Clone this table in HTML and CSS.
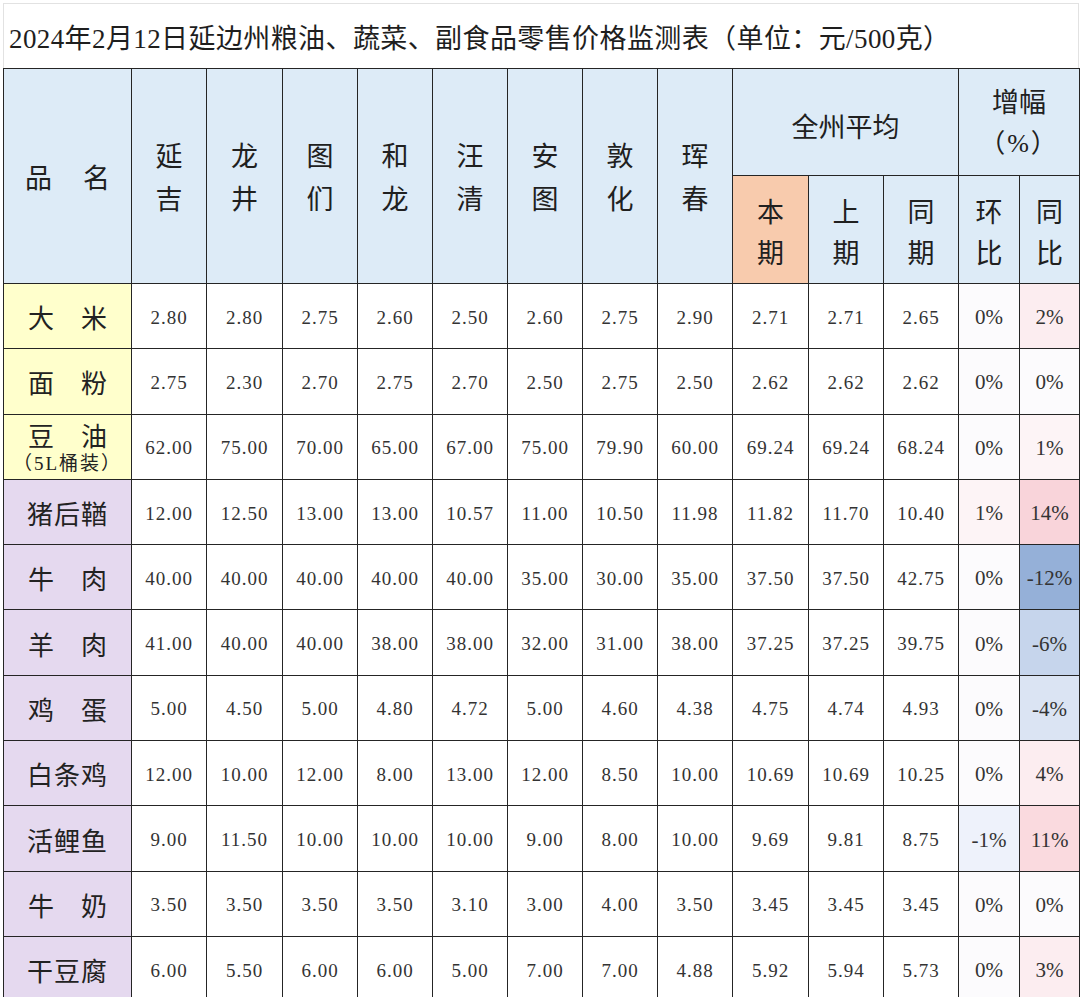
FILE: index.html
```html
<!DOCTYPE html>
<html lang="zh-CN">
<head>
<meta charset="utf-8">
<title>延边州粮油、蔬菜、副食品零售价格监测表</title>
<link rel="stylesheet" href="styles.css">
</head>
<body>
<div class="sheet">
  <div class="title">2024年2月12日延边州粮油、蔬菜、副食品零售价格监测表（单位：元/500克）</div>
  <table class="grid">
    <colgroup>
      <col class="c-name"><col class="c-city"><col class="c-city w76"><col class="c-city"><col class="c-city"><col class="c-city"><col class="c-city"><col class="c-city"><col class="c-city"><col class="c-city w76"><col class="c-city"><col class="c-city"><col class="c-pct w61"><col class="c-pct">
    </colgroup>
    <thead>
      <tr class="hr1">
        <th rowspan="2" class="hname"><div class="spread"><span>品</span><span>名</span></div></th>
        <th rowspan="2">延<br>吉</th>
        <th rowspan="2">龙<br>井</th>
        <th rowspan="2">图<br>们</th>
        <th rowspan="2">和<br>龙</th>
        <th rowspan="2">汪<br>清</th>
        <th rowspan="2">安<br>图</th>
        <th rowspan="2">敦<br>化</th>
        <th rowspan="2">珲<br>春</th>
        <th colspan="3" class="group">全州平均</th>
        <th colspan="2" class="rise">增幅<br><span class="pct">（%）</span></th>
      </tr>
      <tr class="hr2">
        <th class="cur">本<br>期</th>
        <th>上<br>期</th>
        <th>同<br>期</th>
        <th>环<br>比</th>
        <th>同<br>比</th>
      </tr>
    </thead>
    <tbody>
      <tr>
        <td class="name grain"><div class="spread"><span>大</span><span>米</span></div></td>
        <td>2.80</td><td>2.80</td><td>2.75</td><td>2.60</td><td>2.50</td><td>2.60</td><td>2.75</td><td>2.90</td>
        <td>2.71</td><td>2.71</td><td>2.65</td>
        <td class="pc p0">0%</td><td class="pc up1">2%</td>
      </tr>
      <tr>
        <td class="name grain"><div class="spread"><span>面</span><span>粉</span></div></td>
        <td>2.75</td><td>2.30</td><td>2.70</td><td>2.75</td><td>2.70</td><td>2.50</td><td>2.75</td><td>2.50</td>
        <td>2.62</td><td>2.62</td><td>2.62</td>
        <td class="pc p0">0%</td><td class="pc p0">0%</td>
      </tr>
      <tr>
        <td class="name grain"><div class="spread"><span>豆</span><span>油</span></div><div class="note">（5L桶装）</div></td>
        <td>62.00</td><td>75.00</td><td>70.00</td><td>65.00</td><td>67.00</td><td>75.00</td><td>79.90</td><td>60.00</td>
        <td>69.24</td><td>69.24</td><td>68.24</td>
        <td class="pc p0">0%</td><td class="pc up0">1%</td>
      </tr>
      <tr>
        <td class="name side"><div class="three">猪后鞧</div></td>
        <td>12.00</td><td>12.50</td><td>13.00</td><td>13.00</td><td>10.57</td><td>11.00</td><td>10.50</td><td>11.98</td>
        <td>11.82</td><td>11.70</td><td>10.40</td>
        <td class="pc up0">1%</td><td class="pc up3">14%</td>
      </tr>
      <tr>
        <td class="name side"><div class="spread"><span>牛</span><span>肉</span></div></td>
        <td>40.00</td><td>40.00</td><td>40.00</td><td>40.00</td><td>40.00</td><td>35.00</td><td>30.00</td><td>35.00</td>
        <td>37.50</td><td>37.50</td><td>42.75</td>
        <td class="pc p0">0%</td><td class="pc dn3">-12%</td>
      </tr>
      <tr>
        <td class="name side"><div class="spread"><span>羊</span><span>肉</span></div></td>
        <td>41.00</td><td>40.00</td><td>40.00</td><td>38.00</td><td>38.00</td><td>32.00</td><td>31.00</td><td>38.00</td>
        <td>37.25</td><td>37.25</td><td>39.75</td>
        <td class="pc p0">0%</td><td class="pc dn2">-6%</td>
      </tr>
      <tr>
        <td class="name side"><div class="spread"><span>鸡</span><span>蛋</span></div></td>
        <td>5.00</td><td>4.50</td><td>5.00</td><td>4.80</td><td>4.72</td><td>5.00</td><td>4.60</td><td>4.38</td>
        <td>4.75</td><td>4.74</td><td>4.93</td>
        <td class="pc p0">0%</td><td class="pc dn1">-4%</td>
      </tr>
      <tr>
        <td class="name side"><div class="three">白条鸡</div></td>
        <td>12.00</td><td>10.00</td><td>12.00</td><td>8.00</td><td>13.00</td><td>12.00</td><td>8.50</td><td>10.00</td>
        <td>10.69</td><td>10.69</td><td>10.25</td>
        <td class="pc p0">0%</td><td class="pc up1">4%</td>
      </tr>
      <tr>
        <td class="name side"><div class="three">活鲤鱼</div></td>
        <td>9.00</td><td>11.50</td><td>10.00</td><td>10.00</td><td>10.00</td><td>9.00</td><td>8.00</td><td>10.00</td>
        <td>9.69</td><td>9.81</td><td>8.75</td>
        <td class="pc dn0">-1%</td><td class="pc up2">11%</td>
      </tr>
      <tr>
        <td class="name side"><div class="spread"><span>牛</span><span>奶</span></div></td>
        <td>3.50</td><td>3.50</td><td>3.50</td><td>3.50</td><td>3.10</td><td>3.00</td><td>4.00</td><td>3.50</td>
        <td>3.45</td><td>3.45</td><td>3.45</td>
        <td class="pc p0">0%</td><td class="pc p0">0%</td>
      </tr>
      <tr>
        <td class="name side"><div class="three">干豆腐</div></td>
        <td>6.00</td><td>5.50</td><td>6.00</td><td>6.00</td><td>5.00</td><td>7.00</td><td>7.00</td><td>4.88</td>
        <td>5.92</td><td>5.94</td><td>5.73</td>
        <td class="pc p0">0%</td><td class="pc up1">3%</td>
      </tr>
    </tbody>
  </table>
</div>
</body>
</html>
```

FILE: styles.css
```css
html, body {
  margin: 0;
  padding: 0;
  background: #ffffff;
}

body {
  font-family: "Liberation Serif", "Noto Sans CJK SC", serif;
  color: #222222;
}

.sheet {
  margin: 3px 0 0 3px;
  width: 1076px;
}

.title {
  box-sizing: border-box;
  height: 65px;
  padding: 5px 0 0 5px;
  line-height: 60px;
  font-size: 27px;
  letter-spacing: 0.4px;
  color: #1e1e1e;
  white-space: nowrap;
  border: 1px solid #e2e2e2;
  border-bottom: none;
}

.grid {
  border-collapse: collapse;
  table-layout: fixed;
  width: 1076px;
}

.c-name { width: 128px; }
.c-city { width: 75px; }
.c-pct { width: 60px; }
.w76 { width: 76px; }
.w61 { width: 61px; }

.grid th,
.grid td {
  border: 1px solid #252525;
  padding: 0;
  text-align: center;
  vertical-align: middle;
}

.grid th {
  background: #ddebf7;
  font-family: "Noto Sans CJK SC", sans-serif;
  font-weight: 400;
  font-size: 27px;
  line-height: 43px;
  color: #202020;
}

.hr1 { height: 107px; }
.hr2 { height: 108px; }

.hr2 th {
  line-height: 41px;
  padding-top: 2px;
}

.grid th.group {
  padding-top: 6px;
}

.grid th.rise {
  line-height: 40px;
}

.pct {
  font-family: "Liberation Serif", "Noto Sans CJK SC", serif;
  font-size: 26px;
  letter-spacing: 2px;
  white-space: nowrap;
}

.grid th.cur {
  background: #f8cbad;
}

.hname .spread {
  padding: 0 21px 0 21px;
}

.spread {
  display: flex;
  justify-content: space-between;
}

.grid tbody tr {
  height: 65.3px;
}

.grid td {
  font-size: 19px;
  letter-spacing: 1px;
  color: #333333;
  background: #ffffff;
  padding-top: 3px;
}

.grid td.pc {
  font-size: 21px;
  letter-spacing: 0;
}

.grid td.name {
  font-family: "Noto Sans CJK SC", sans-serif;
  font-size: 26px;
  letter-spacing: 0;
  color: #222222;
  padding: 2px 0 0 0;
  line-height: 30px;
}

.name .spread {
  padding: 0 24px 0 24px;
}

.name .three {
  letter-spacing: 1px;
}

.name .note {
  font-family: "Liberation Serif", "Noto Sans CJK SC", serif;
  font-size: 19px;
  line-height: 22px;
  margin-top: 3px;
  letter-spacing: 2px;
  white-space: nowrap;
}

.grain { background: #ffffcc !important; }
.side { background: #e5d9ef !important; }

.grid td.p0 { background: #fcfbfd; }
.grid td.up0 { background: #fdf4f6; }
.grid td.up1 { background: #fcedf0; }
.grid td.up2 { background: #fadadf; }
.grid td.up3 { background: #f9d4da; }
.grid td.dn0 { background: #eef2fb; }
.grid td.dn1 { background: #dbe4f3; }
.grid td.dn2 { background: #c6d5ec; }
.grid td.dn3 { background: #95b0d8; }
```
